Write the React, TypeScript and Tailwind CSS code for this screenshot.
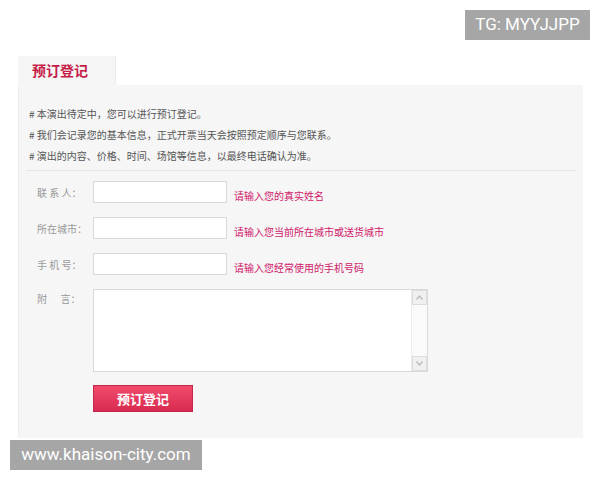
const cjk = "font-['Noto_Sans_CJK_SC',sans-serif]";

const notes = [
  '# 本演出待定中，您可以进行预订登记。',
  '# 我们会记录您的基本信息，正式开票当天会按照预定顺序与您联系。',
  '# 演出的内容、价格、时间、场馆等信息，以最终电话确认为准。',
];

const fields = [
  { label: '联 系 人：', hint: '请输入您的真实姓名' },
  { label: '所在城市：', hint: '请输入您当前所在城市或送货城市' },
  { label: '手 机 号：', hint: '请输入您经常使用的手机号码' },
];

const Arrow = ({ up }: { up?: boolean }) => (
  <div className="flex h-[15px] w-[15px] items-center justify-center border border-[#dcdcdc] bg-[#f0f0f0]">
    <svg width="7" height="5" viewBox="0 0 7 5">
      <path d={up ? 'M0.5 4.5 L3.5 1 L6.5 4.5' : 'M0.5 0.5 L3.5 4 L6.5 0.5'} fill="none" stroke="#b8b8b8" strokeWidth="1.2" />
    </svg>
  </div>
);

const App = () => {
  return (
    <div className={`relative h-[480px] w-[600px] overflow-hidden bg-white ${cjk}`}>
      <div className="absolute left-[465px] top-[10px] flex h-[30px] w-[125px] items-center justify-center bg-[#a6a6a6] font-['Roboto',sans-serif] text-[17px] text-white">
        TG: MYYJJPP
      </div>

      <div className="ml-[18px] w-[565px] pt-[56px]">
        <div className="flex h-[29px]">
          <div className="flex w-[98px] items-center border-r border-[#ececec] bg-[#f5f5f5] pl-[14px] text-[14px] font-bold text-[#c61d48]">
            预订登记
          </div>
        </div>

        <div className="border-l border-[#eeeeee] bg-[#f6f6f6] pb-[26px] pt-[18px]">
          <div className="pl-[10px] text-[10px] leading-[21px] text-[#555]">
            {notes.map((n) => (
              <p key={n}>{n}</p>
            ))}
          </div>
          <div className="mx-[7px] mt-[4px] border-t border-[#e6e6e6]" />

          <div className="mt-[10px] flex flex-col gap-[14px]">
            {fields.map((f) => (
              <div key={f.label} className="flex h-[22px]">
                <label className="w-[74px] shrink-0 self-center pl-[18px] text-[10px] text-[#999]">{f.label}</label>
                <input className="h-[22px] w-[134px] border border-[#d9d9d9] bg-white outline-none" />
                <span className="ml-[7px] self-end text-[10px] leading-[14px] text-[#d0196b]">{f.hint}</span>
              </div>
            ))}

            <div className="flex">
              <label className="w-[74px] shrink-0 pl-[18px] pt-[2px] text-[10px] text-[#999]">附&nbsp;&nbsp;&nbsp;&nbsp;&nbsp;&nbsp;言：</label>
              <div className="flex h-[83px] w-[335px] border border-[#d9d9d9] bg-white">
                <textarea className="h-full flex-1 resize-none outline-none" />
                <div className="flex w-[16px] flex-col justify-between border-l border-[#ececec] bg-[#fafafa]">
                  <Arrow up />
                  <Arrow />
                </div>
              </div>
            </div>
          </div>

          <div className="ml-[74px] mt-[13px]">
            <button className="flex h-[27px] w-[100px] items-center justify-center border border-[#c4264a] bg-gradient-to-b from-[#f04a6c] to-[#d82a50] text-[13px] font-bold text-white">
              预订登记
            </button>
          </div>
        </div>
      </div>

      <div className="absolute left-[10px] top-[440px] flex h-[30px] w-[192px] items-center justify-center bg-[#a6a6a6] font-['Roboto',sans-serif] text-[17px] text-white">
        www.khaison-city.com
      </div>
    </div>
  );
};

export default App;
